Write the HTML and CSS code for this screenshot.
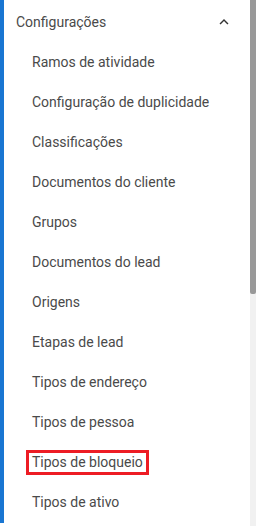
FILE: index.html
```html
<!DOCTYPE html>
<html lang="pt-BR">
<head>
    <meta charset="UTF-8">
    <meta name="viewport" content="width=device-width, initial-scale=1.0">
    <title>Configurações</title>
    <link rel="stylesheet" href="styles.css">
</head>
<body>
    <div id="page">
        <nav class="menu">
            <div class="group-header">
                <span class="group-title">Configurações</span>
                <svg class="chevron" viewBox="0 0 24 24" width="18" height="18">
                    <path d="M12 8l-6 6 1.41 1.41L12 10.83l4.59 4.58L18 14z"/>
                </svg>
            </div>
            <ul class="items">
                <li>Ramos de atividade</li>
                <li>Configuração de duplicidade</li>
                <li>Classificações</li>
                <li>Documentos do cliente</li>
                <li>Grupos</li>
                <li>Documentos do lead</li>
                <li>Origens</li>
                <li>Etapas de lead</li>
                <li>Tipos de endereço</li>
                <li>Tipos de pessoa</li>
                <li><span class="marked">Tipos de bloqueio</span></li>
                <li>Tipos de ativo</li>
            </ul>
        </nav>
        <div class="scrollbar">
            <div class="thumb"></div>
        </div>
    </div>
</body>
</html>
```
FILE: styles.css
```css
    body {
        margin: 0;
        font-family: Roboto, "Noto Sans", sans-serif;
        color: #4a4a4a;
        background-color: #fff;
    }
    #page {
        display: flex;
        height: 526px;
        overflow: hidden;
    }
    .menu {
        flex: 1;
        height: 523px;
        border-left: 4px solid #1976d2;
        padding-top: 2px;
        box-sizing: border-box;
    }
    .group-header {
        display: flex;
        align-items: center;
        justify-content: space-between;
        height: 40px;
        padding: 0 17px 0 12px;
        font-size: 14px;
    }
    .chevron {
        fill: #333;
    }
    .items {
        list-style: none;
        margin: 0;
        padding: 0;
    }
    .items li {
        display: flex;
        align-items: center;
        height: 40px;
        padding-left: 28px;
        font-size: 14px;
    }
    .marked {
        outline: 3px solid #ed1c24;
        outline-offset: 0;
        padding: 1px 3px 2px 3px;
        margin-left: -3px;
    }
    .scrollbar {
        width: 6px;
        background: #f1f1f1;
    }
    .thumb {
        height: 294px;
        background: #999;
        border-radius: 0 0 2px 2px;
    }
```
